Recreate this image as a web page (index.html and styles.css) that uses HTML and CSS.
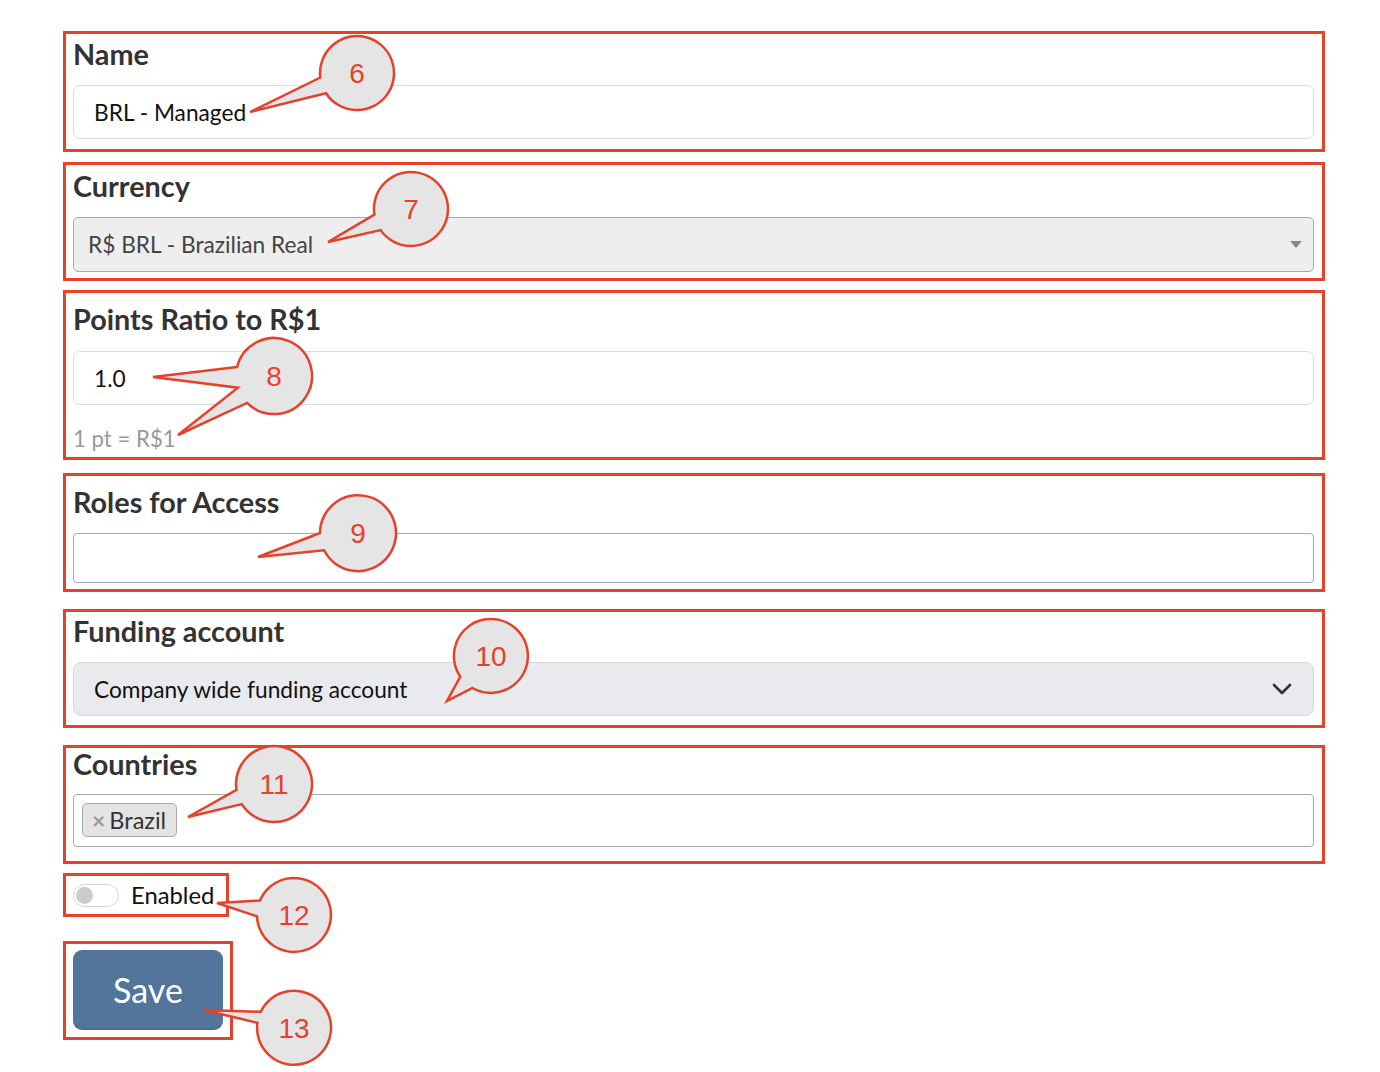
FILE: index.html
```html
<!DOCTYPE html>
<html lang="en">
<head>
    <meta charset="UTF-8">
    <meta name="viewport" content="width=device-width, initial-scale=1.0">
    <title>Program settings</title>
    <link rel="stylesheet" href="styles.css">
</head>
<body>
<div class="page">
    <form class="settings">
        <div class="mark mark-name">
            <label class="field-label" for="name">Name</label>
            <input class="text-input" id="name" type="text" value="BRL - Managed">
        </div>

        <div class="mark mark-currency">
            <div class="field-label">Currency</div>
            <div class="select-box currency-select">
                <span>R$ BRL - Brazilian Real</span>
                <svg width="12" height="7" viewBox="0 0 12 7"><path d="M0 0h12L6 7z" fill="#888"/></svg>
            </div>
        </div>

        <div class="mark mark-ratio">
            <label class="field-label" for="ratio">Points Ratio to R$1</label>
            <input class="text-input" id="ratio" type="text" value="1.0">
            <div class="help-text">1 pt = R$1</div>
        </div>

        <div class="mark mark-roles">
            <label class="field-label" for="roles">Roles for Access</label>
            <input class="text-input roles-input" id="roles" type="text" value="">
        </div>

        <div class="mark mark-funding">
            <div class="field-label">Funding account</div>
            <div class="select-box funding-select">
                <span>Company wide funding account</span>
                <svg width="20" height="12" viewBox="0 0 20 12"><path d="M2 2l8 8 8-8" fill="none" stroke="#333" stroke-width="2.6" stroke-linecap="round" stroke-linejoin="round"/></svg>
            </div>
        </div>

        <div class="mark mark-countries">
            <div class="field-label">Countries</div>
            <div class="tag-input">
                <span class="tag"><span class="tag-remove">×</span>Brazil</span>
            </div>
        </div>

        <div class="mark mark-enabled">
            <span class="toggle"><span class="knob"></span></span>
            <span class="toggle-text">Enabled</span>
        </div>

        <div class="mark mark-save">
            <button class="save-btn" type="button">Save</button>
        </div>
    </form>

    <!-- numbered callouts drawn over the form -->
    <svg class="callouts" width="1380" height="1072" viewBox="0 0 1380 1072">
        <g class="bubble">
            <path d="M320.3 77.5L250 112L326 93.2A37 37 0 1 0 320.3 77.5Z"/>
            <path d="M374.4 214.6L328 242L380.6 230.1A37 37 0 1 0 374.4 214.6Z"/>
            <path d="M237.1 367L153 377L237.9 387.7L178 435L247.1 402.9A38 38 0 1 0 237.1 367Z"/>
            <path d="M320 533L258 557L324.1 550.3A38 38 0 1 0 320 533Z"/>
            <path d="M460.3 676.7L447 701L472.5 688A37 37 0 1 0 460.3 676.7Z"/>
            <path d="M236.5 789.9L188 817L241.8 804.1A38 38 0 1 0 236.5 789.9Z"/>
            <path d="M259.9 900.5L217 903L257 916.3A37 37 0 1 0 259.9 900.5Z"/>
            <path d="M260.7 1011.8L204 1010L257.4 1022.8A37 37 0 1 0 260.7 1011.8Z"/>
        </g>
        <g class="bubble-num">
            <text x="357" y="83">6</text>
            <text x="411" y="219">7</text>
            <text x="274" y="386">8</text>
            <text x="358" y="543">9</text>
            <text x="491" y="666">10</text>
            <text x="274" y="794">11</text>
            <text x="294" y="925">12</text>
            <text x="294" y="1038">13</text>
        </g>
    </svg>
</div>
</body>
</html>
```
FILE: styles.css
```css
body {
    margin: 0;
    font-family: Lato, "Open Sans", sans-serif;
    background-color: white;
    color: #333;
}
.page {
    position: relative;
    height: 1072px;
    overflow: hidden;
}
.settings {
    width: 1262px;
    margin-left: 63px;
    padding-top: 31px;
}

/* red annotation boxes */
.mark {
    border: 3px solid #e5412b;
    padding: 4px 8px 8px 7px;
}
.mark-name { padding-top: 4px; padding-bottom: 10px; margin-bottom: 10px; }
.mark-name .field-label { margin-bottom: 15px; }
.mark-currency { padding-top: 5px; padding-bottom: 6px; margin-bottom: 9px; }
.mark-ratio { padding-top: 10px; padding-bottom: 6px; margin-bottom: 13px; }
.mark-ratio .field-label { margin-bottom: 16px; }
.mark-roles { padding-top: 10px; padding-bottom: 6px; margin-bottom: 17px; }
.mark-funding { padding-top: 3px; padding-bottom: 9px; margin-bottom: 17px; }
.mark-countries { padding-top: 0; padding-bottom: 14px; margin-bottom: 9px; }
.mark-enabled {
    display: flex;
    align-items: center;
    width: fit-content;
    height: 38px;
    padding: 0 12px 0 7px;
    margin-bottom: 24px;
}
.mark-save {
    width: fit-content;
    padding: 6px 7px 7px 7px;
}

.field-label {
    display: block;
    font-size: 28.8px;
    font-weight: bold;
    line-height: 32px;
    color: #333;
    margin-bottom: 15px;
}
.mark-countries .field-label { margin-bottom: 14px; }

.text-input {
    display: block;
    width: 100%;
    box-sizing: border-box;
    height: 54px;
    padding: 0 20px;
    font-family: Lato, sans-serif;
    font-size: 22.7px;
    color: #111;
    background: white;
    border: 1px solid #dcdcdc;
    border-radius: 7px;
    outline: none;
}
.roles-input {
    height: 50px;
    border-color: #aaa;
    border-radius: 4px;
}
.help-text {
    margin-top: 21px;
    font-size: 22.2px;
    line-height: 25px;
    color: #999;
}

.select-box {
    display: flex;
    align-items: center;
    justify-content: space-between;
    box-sizing: border-box;
    font-size: 22.7px;
}
.currency-select {
    height: 55px;
    padding: 0 11px 0 14px;
    color: #444;
    background: #eee;
    border: 1px solid #aaa;
    border-radius: 5px;
}
.funding-select {
    height: 54px;
    padding: 0 21px 0 20px;
    color: #111;
    background: #e9eaee;
    border: 1px solid #d6d7db;
    border-radius: 8px;
}

.tag-input {
    box-sizing: border-box;
    height: 53px;
    padding: 8px;
    border: 1px solid #aaa;
    border-radius: 4px;
}
.tag {
    display: inline-flex;
    align-items: center;
    box-sizing: border-box;
    height: 34px;
    padding: 0 10px 0 9px;
    font-size: 23.5px;
    color: #333;
    background: #e4e4e4;
    border: 1px solid #aaa;
    border-radius: 5px;
}
.tag-remove {
    font-size: 23px;
    font-weight: bold;
    color: #999;
    margin-right: 4px;
}

.toggle {
    display: inline-block;
    position: relative;
    box-sizing: border-box;
    width: 46px;
    height: 23px;
    border: 1px solid #d4d4d4;
    border-radius: 12px;
    background: white;
}
.knob {
    position: absolute;
    left: 2px;
    top: 2px;
    width: 17px;
    height: 17px;
    border-radius: 50%;
    background: #ccc;
}
.toggle-text {
    margin-left: 12px;
    font-size: 23.8px;
    color: #111;
}

.save-btn {
    display: block;
    width: 150px;
    height: 80px;
    font-family: Lato, sans-serif;
    font-size: 34px;
    color: white;
    background: #53759b;
    border: none;
    border-bottom: 2px solid #4a6a8e;
    border-radius: 9px;
}

.callouts {
    position: absolute;
    left: 0;
    top: 0;
    pointer-events: none;
}
.bubble path {
    fill: #e5e5e5;
    stroke: #e5412b;
    stroke-width: 2.5;
    stroke-linejoin: miter;
}
.bubble-num text {
    font-family: "Liberation Sans", Arial, sans-serif;
    font-size: 28px;
    fill: #e5412b;
    text-anchor: middle;
}
```
